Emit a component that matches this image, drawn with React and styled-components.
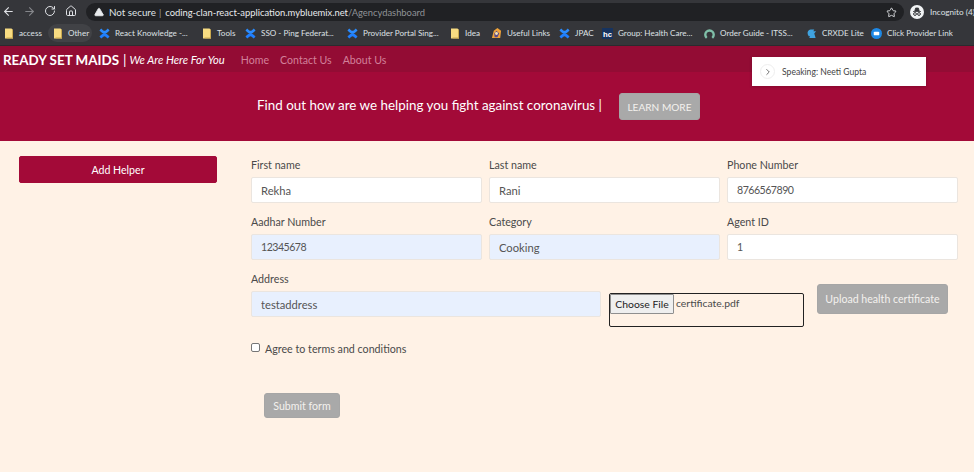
import React from "react";
import styled, { createGlobalStyle } from "styled-components";
import { ArrowLeft, ArrowRight, RotateCw, Home, Star, TriangleAlert, ChevronRight } from "lucide-react";

const FONT = `Lato, "Open Sans", "Liberation Sans", sans-serif`;

const GlobalStyle = createGlobalStyle`
  html, body {
    margin: 0;
    padding: 0;
    height: 100%;
    background: #fff2e6;
    overflow: hidden;
  }
  * {
    box-sizing: border-box;
  }
  body {
    font-family: ${FONT};
  }
`;

const Page = styled.div`
  width: 974px;
  height: 472px;
  position: relative;
  background: #fff2e6;
  overflow: hidden;
`;

const Toolbar = styled.div`
  height: 23px;
  background: #35363a;
  display: flex;
  align-items: center;
  padding: 1px 0 0 2px;
  color: #dfe1e5;
`;

const NavIcons = styled.div`
  display: flex;
  align-items: center;
  width: 84px;
  flex: none;
  gap: 7px;
`;

const ToolIcon = styled.span`
  width: 14px;
  height: 14px;
  display: flex;
  color: ${(props) => (props.$off ? "#85878b" : "#dfe1e5")};
`;

const Omnibox = styled.div`
  width: 818px;
  height: 18px;
  flex: none;
  border-radius: 9px;
  background: #202124;
  display: flex;
  align-items: center;
  padding: 0 7px 0 8px;
  font-size: 9.4px;
  white-space: nowrap;
`;

const Secure = styled.span`
  margin-left: 5px;
  font-size: 9.8px;
  color: #dfe1e5;
`;

const Divider = styled.span`
  margin: 0 4px 0 3px;
  color: #9aa0a6;
`;

const Host = styled.span`
  color: #e8eaed;
`;

const UrlPath = styled.span`
  color: #8f9296;
`;

const StarWrap = styled.span`
  margin-left: auto;
  display: flex;
  color: #dfe1e5;
`;

const Profile = styled.div`
  display: flex;
  align-items: center;
  margin-left: 6px;
  gap: 6px;
  font-size: 8.2px;
  white-space: nowrap;
  color: #dfe1e5;
`;

const Avatar = styled.svg`
  width: 14px;
  height: 14px;
  flex: none;
`;

const BookmarkBar = styled.div`
  height: 23px;
  background: #35363a;
  border-bottom: 1px solid #2a2b2e;
  display: flex;
  align-items: center;
  padding: 0 0 2px 4px;
`;

const Bookmark = styled.div`
  width: ${(props) => props.$w}px;
  flex: none;
  display: flex;
  align-items: center;
  gap: 5px;
  font-size: 8.1px;
  color: #dfe1e5;
  white-space: nowrap;
`;

const ActiveBookmark = styled(Bookmark)`
  height: 18px;
  margin: 0 7px 0 -5px;
  padding-left: 5px;
  border-radius: 9px;
  background: #414246;
`;

const FolderIcon = styled.svg`
  width: 10px;
  height: 11px;
  flex: none;
`;

const MarkIcon = styled.svg`
  width: 11px;
  height: 11px;
  flex: none;
`;

const NavBar = styled.nav`
  height: 26px;
  background: #930c34;
  display: flex;
  align-items: center;
  padding: 1px 0 0 3px;
  color: #fff;
  white-space: nowrap;
`;

const Brand = styled.strong`
  font-size: 13.4px;
  font-weight: 700;
`;

const BrandBar = styled.span`
  font-size: 14px;
  margin: 0 3px 0 4px;
`;

const Tagline = styled.em`
  font-size: 11.2px;
  font-style: italic;
`;

const NavLinks = styled.div`
  display: flex;
  gap: 11px;
  margin-left: 16px;
`;

const NavLink = styled.a`
  font-size: 10.6px;
  color: #d2809a;
`;

const Banner = styled.section`
  height: 69px;
  background: #a30a38;
  display: flex;
  align-items: center;
  justify-content: center;
  gap: 17px;
  padding-right: 17px;
  color: #fff;
`;

const BannerText = styled.span`
  font-size: 13.4px;
  margin-bottom: 3px;
  white-space: nowrap;
`;

const GrayButton = styled.button`
  font-family: ${FONT};
  border: 1px solid #a6a6a6;
  border-radius: 3px;
  background: #a9a9a9;
  color: #f4f1ee;
  font-size: 10.6px;
  padding: 0;
  display: block;
  flex: none;
  white-space: nowrap;
`;

const LearnMore = styled(GrayButton)`
  width: 81px;
  height: 27px;
  font-size: 10.1px;
`;

const Content = styled.main`
  display: flex;
  padding: 15px 16px 0 19px;
`;

const Sidebar = styled.aside`
  width: 198px;
  flex: none;
  margin-right: 34px;
`;

const AddHelper = styled.button`
  font-family: ${FONT};
  width: 100%;
  height: 27px;
  border: 1px solid #a30a38;
  border-radius: 2px;
  background: #a30a38;
  color: #fff;
  font-size: 10.6px;
`;

const Form = styled.form`
  flex: 1;
  min-width: 0;
  display: flex;
  flex-direction: column;
`;

const Row = styled.div`
  display: grid;
  grid-template-columns: repeat(3, 231px);
  gap: 7px;
  margin-bottom: 10px;
`;

const AddressRow = styled.div`
  display: flex;
  align-items: flex-start;
`;

const Field = styled.div`
  width: ${(props) => (props.$w ? `${props.$w}px` : "auto")};
  flex: none;
`;

const Label = styled.label`
  display: block;
  height: 21px;
  padding-top: 1px;
  font-size: 10.7px;
  line-height: 16px;
  color: #4a4a4a;
`;

const Input = styled.input`
  display: block;
  width: 100%;
  height: 26px;
  padding: 0 9px;
  border: 1px solid #ebe5df;
  border-radius: 2px;
  background: ${(props) => (props.$autofill ? "#e8f0fe" : "#fff")};
  color: #555;
  font-family: ${FONT};
  font-size: ${(props) => (props.$digits ? "10.6px" : "11.2px")};
  letter-spacing: ${(props) => (props.$digits ? "-0.5px" : "0")};
  outline: none;
`;

const FileBox = styled.div`
  width: 195px;
  height: 34px;
  flex: none;
  margin: 23px 0 0 8px;
  border: 1px solid #222;
  border-radius: 2px;
  display: flex;
  align-items: flex-start;
  font-size: 10.4px;
  color: #4a4a4a;
`;

const FileButton = styled.span`
  height: 20px;
  width: 64px;
  flex: none;
  display: flex;
  align-items: center;
  justify-content: center;
  background: #efefef;
  border: 1px solid #8f8f8f;
  border-radius: 1px;
  color: #222;
`;

const FileName = styled.span`
  margin-left: 2px;
  line-height: 19px;
`;

const UploadButton = styled(GrayButton)`
  width: 131px;
  height: 30px;
  margin: 14px 0 0 13px;
`;

const TermsRow = styled.div`
  display: flex;
  align-items: center;
  margin-top: 13px;
  height: 16px;
  font-size: 10.7px;
  color: #4a4a4a;
`;

const Checkbox = styled.input`
  appearance: none;
  width: 9px;
  height: 9px;
  margin: 0 5px 2px 0;
  border: 1px solid #767676;
  border-radius: 2px;
  background: #fff;
`;

const SubmitButton = styled(GrayButton)`
  width: 76px;
  height: 25px;
  margin: 37px 0 0 13px;
`;

const SpeakingToast = styled.div`
  position: absolute;
  left: 752px;
  top: 57px;
  width: 174px;
  height: 29px;
  background: #fff;
  display: flex;
  align-items: center;
  padding-left: 8px;
  gap: 7px;
  font-size: 8.6px;
  color: #444;
  box-shadow: 0 1px 3px rgba(60, 0, 20, 0.3);
`;

const ToastChevron = styled.span`
  width: 15px;
  height: 15px;
  border: 1px solid #eee;
  border-radius: 50%;
  display: flex;
  align-items: center;
  justify-content: center;
  color: #555;
`;

const Folder = () => (
  <FolderIcon viewBox="0 0 10 11">
    <path d="M1 0.5h6.5L9 2v8.5H1z" fill="#f8dc82" />
    <path d="M8 1.5 9 2v8.5H2.5v-1H8z" fill="#c9a94f" />
  </FolderIcon>
);

const Confluence = () => (
  <MarkIcon viewBox="0 0 12 12">
    <path d="M0.5 9.3C2.5 7.5 4 5.8 6 5.8s3.5 1.7 5.5 3.5L9.6 11.5C8 10 7 8.9 6 8.9S4 10 2.4 11.5z" fill="#1f7fff" />
    <path d="M0.5 2.7C2.5 4.5 4 6.2 6 6.2s3.5-1.7 5.5-3.5L9.6 0.5C8 2 7 3.1 6 3.1S4 2 2.4 0.5z" fill="#2a8cff" />
  </MarkIcon>
);

const HcLogo = () => (
  <MarkIcon viewBox="0 0 12 12">
    <rect width="12" height="12" fill="#16335f" />
    <text x="6" y="9.5" fontSize="8.5" fontWeight="700" textAnchor="middle" fill="#fff" fontFamily="Liberation Sans">hc</text>
  </MarkIcon>
);

const RingLogo = () => (
  <MarkIcon viewBox="0 0 12 12">
    <path d="M3 10.8a4.6 4.6 0 1 1 6 0" fill="none" stroke="#7fbfa8" strokeWidth="2.6" />
  </MarkIcon>
);

const UsefulLogo = () => (
  <MarkIcon viewBox="0 0 12 12">
    <path d="M1 11 3 3l4-3 4 3-1 8z" fill="#f0a33a" />
    <path d="M3.5 6 6 3l3 3-2 4H4z" fill="#5a4a8a" />
    <circle cx="6" cy="6" r="1.6" fill="#f6e3b0" />
  </MarkIcon>
);

const CrxLogo = () => (
  <MarkIcon viewBox="0 0 12 12">
    <path d="M2 7a4 4 0 0 1 3-5.5h4L8 3.5h3L9 6l1.5 5H3.5l1-2H3z" fill="#3fa3e0" />
  </MarkIcon>
);

const ClickLogo = () => (
  <MarkIcon viewBox="0 0 12 12">
    <circle cx="6" cy="6" r="6" fill="#1e88e5" />
    <rect x="3" y="4" width="6" height="4" rx="1" fill="#fff" />
  </MarkIcon>
);

const bookmarks = [
  { label: "access", w: 49, icon: <Folder /> },
  { label: "Other", w: 44, icon: <Folder />, active: true },
  { label: "React Knowledge -...", w: 103, icon: <Confluence /> },
  { label: "Tools", w: 43, icon: <Folder /> },
  { label: "SSO - Ping Federat...", w: 102, icon: <Confluence /> },
  { label: "Provider Portal Sing...", w: 103, icon: <Confluence /> },
  { label: "Idea", w: 41, icon: <Folder /> },
  { label: "Useful Links", w: 68, icon: <UsefulLogo /> },
  { label: "JPAC", w: 43, icon: <Confluence /> },
  { label: "Group: Health Care...", w: 102, icon: <HcLogo /> },
  { label: "Order Guide - ITSS...", w: 102, icon: <RingLogo /> },
  { label: "CRXDE Lite", w: 65, icon: <CrxLogo /> },
  { label: "Click Provider Link", w: 100, icon: <ClickLogo /> },
];

const Browser = () => (
  <>
    <Toolbar>
      <NavIcons>
        <ToolIcon><ArrowLeft size={13} /></ToolIcon>
        <ToolIcon $off><ArrowRight size={13} /></ToolIcon>
        <ToolIcon><RotateCw size={12} /></ToolIcon>
        <ToolIcon><Home size={12} /></ToolIcon>
      </NavIcons>
      <Omnibox>
        <TriangleAlert size={10} fill="#e8eaed" color="#e8eaed" />
        <Secure>Not secure</Secure>
        <Divider>|</Divider>
        <Host>coding-clan-react-application.mybluemix.net</Host>
        <UrlPath>/Agencydashboard</UrlPath>
        <StarWrap><Star size={11} /></StarWrap>
      </Omnibox>
      <Profile>
        <Avatar viewBox="0 0 14 14">
          <circle cx="7" cy="7" r="7" fill="#f1f3f4" />
          <path d="M3 6.5h8M4.8 6 5.6 3h2.8l.8 3z" stroke="#35363a" fill="#35363a" strokeWidth="0.8" />
          <circle cx="5" cy="9" r="1.4" fill="none" stroke="#35363a" />
          <circle cx="9" cy="9" r="1.4" fill="none" stroke="#35363a" />
        </Avatar>
        Incognito (4)
      </Profile>
    </Toolbar>
    <BookmarkBar>
      {bookmarks.map((item) => {
        const Item = item.active ? ActiveBookmark : Bookmark;
        return (
          <Item key={item.label} $w={item.w}>
            {item.icon}
            {item.label}
          </Item>
        );
      })}
    </BookmarkBar>
  </>
);

export default function App() {
  return (
    <Page>
      <GlobalStyle />
      <Browser />
      <NavBar>
        <Brand>READY SET MAIDS</Brand>
        <BrandBar>|</BrandBar>
        <Tagline>We Are Here For You</Tagline>
        <NavLinks>
          <NavLink>Home</NavLink>
          <NavLink>Contact Us</NavLink>
          <NavLink>About Us</NavLink>
        </NavLinks>
      </NavBar>
      <Banner>
        <BannerText>Find out how are we helping you fight against coronavirus |</BannerText>
        <LearnMore type="button">LEARN MORE</LearnMore>
      </Banner>
      <Content>
        <Sidebar>
          <AddHelper type="button">Add Helper</AddHelper>
        </Sidebar>
        <Form>
          <Row>
            <Field>
              <Label>First name</Label>
              <Input defaultValue="Rekha" />
            </Field>
            <Field>
              <Label>Last name</Label>
              <Input defaultValue="Rani" />
            </Field>
            <Field>
              <Label>Phone Number</Label>
              <Input $digits defaultValue="8766567890" />
            </Field>
          </Row>
          <Row>
            <Field>
              <Label>Aadhar Number</Label>
              <Input $autofill $digits defaultValue="12345678" />
            </Field>
            <Field>
              <Label>Category</Label>
              <Input $autofill defaultValue="Cooking" />
            </Field>
            <Field>
              <Label>Agent ID</Label>
              <Input $digits defaultValue="1" />
            </Field>
          </Row>
          <AddressRow>
            <Field $w={350}>
              <Label>Address</Label>
              <Input $autofill defaultValue="testaddress" />
            </Field>
            <FileBox>
              <FileButton>Choose File</FileButton>
              <FileName>certificate.pdf</FileName>
            </FileBox>
            <UploadButton type="button">Upload health certificate</UploadButton>
          </AddressRow>
          <TermsRow>
            <Checkbox type="checkbox" />
            Agree to terms and conditions
          </TermsRow>
          <SubmitButton type="button">Submit form</SubmitButton>
        </Form>
      </Content>
      <SpeakingToast>
        <ToastChevron><ChevronRight size={10} /></ToastChevron>
        Speaking: Neeti Gupta
      </SpeakingToast>
    </Page>
  );
}
